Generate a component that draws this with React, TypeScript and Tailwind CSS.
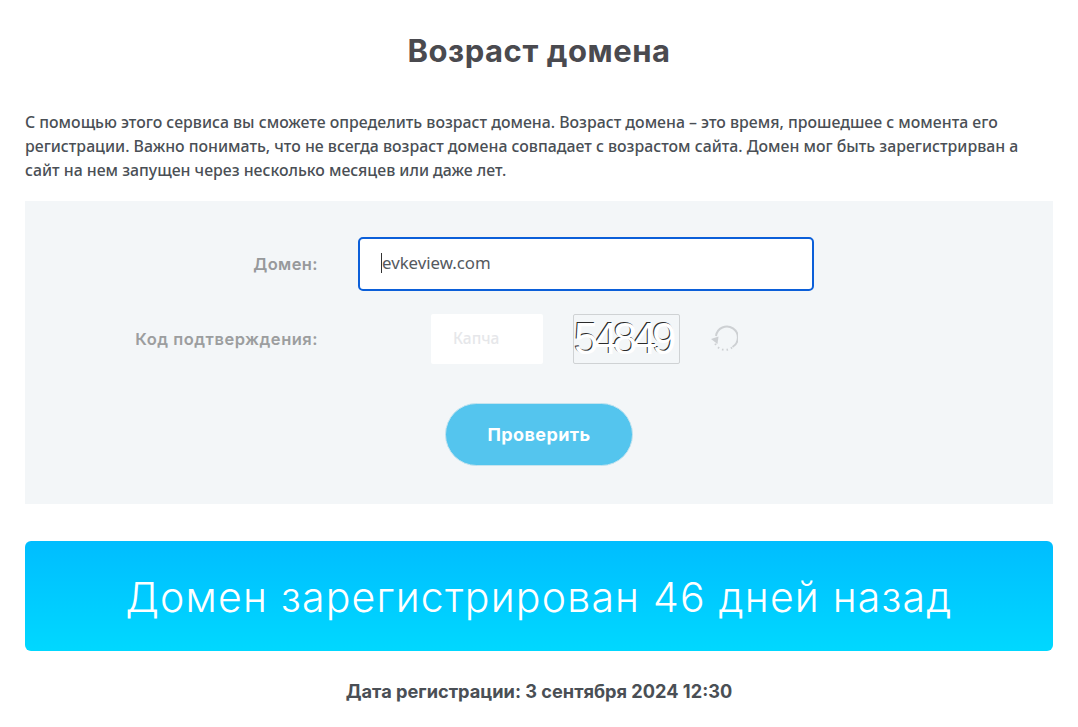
export default function App() {
  return (
    <div className="min-h-[727px] overflow-hidden bg-white px-[25px] font-['Noto_Sans',sans-serif] text-[#4a4f55]">
      <h1 className="pt-[31px] text-center font-['Inter',sans-serif] text-[31px] font-bold leading-[40px] tracking-[0.55px] text-[#4a4a4f]">
        Возраст домена
      </h1>

      <p className="mt-[39px] whitespace-nowrap text-[15.85px] font-medium leading-[24px]">
        С помощью этого сервиса вы сможете определить возраст домена. Возраст домена – это время, прошедшее с момента его
        <br />
        регистрации. Важно понимать, что не всегда возраст домена совпадает с возрастом сайта. Домен мог быть зарегистрирван а
        <br />
        сайт на нем запущен через несколько месяцев или даже лет.
      </p>

      <div className="mt-[19px] flex h-[303px] flex-col bg-[#f3f6f8] pt-[36px]">
        <div className="flex items-center">
          <label className="w-[293px] text-right font-['Inter',sans-serif] text-[16.5px] font-semibold tracking-[0.4px] text-[#97999b]">Домен:</label>
          <div className="ml-[40px] flex h-[54px] w-[456px] items-center rounded-[5px] border-2 border-[#0b5fd9] bg-white pb-[2px] pl-[21px] text-[16.8px] text-[#55595e]">
            <span className="h-[20px] w-px bg-[#333]" />
            <span>evkeview.com</span>
          </div>
        </div>

        <div className="mt-[23px] flex items-center">
          <label className="w-[293px] text-right font-['Inter',sans-serif] text-[16.5px] font-semibold tracking-[0.5px] text-[#9c9e9f]">Код подтверждения:</label>
          <div className="ml-[113px] flex h-[50px] w-[112px] items-center rounded-[2px] bg-white pl-[22px] text-[15.5px] font-medium text-[#e6e7ea]">
            Капча
          </div>
          <div className="ml-[30px] flex h-[50px] w-[107px] items-center overflow-hidden rounded-[2px] border border-[#cfd2d4] bg-[#f3f6f8]">
            <span className="font-['Liberation_Sans',sans-serif] text-[44px] leading-none tracking-[-5px] text-white [text-shadow:-1px_-1px_0_#2a2a2a]">
              54849
            </span>
          </div>
          <svg className="ml-[30px]" width="28" height="28" viewBox="0 -1 28 28" fill="none" stroke="#cdd0d3" strokeWidth="2">
            <path d="M6 10 A 11 11 0 1 1 22.5 21" />
            <path d="M22 21.5 A 11 11 0 0 1 5 17" strokeDasharray="1.5 3" />
            <path d="M1 13 L8.5 10.5 L7.5 18 Z" fill="#cdd0d3" stroke="none" />
          </svg>
        </div>

        <button className="mx-auto mt-[39px] h-[63px] w-[188px] rounded-full border border-[#c5e4ef] bg-[#54c5ee] font-['Inter',sans-serif] text-[18px] font-bold tracking-[0.4px] text-white">
          Проверить
        </button>
      </div>

      <div className="mt-[37px] flex h-[110px] items-center justify-center rounded-[6px] bg-gradient-to-b from-[#00bdff] to-[#00d8ff] pt-[3px] font-['Inter',sans-serif] text-[41px] font-light tracking-[1.2px] text-white">
        Домен зарегистрирован 46 дней назад
      </div>

      <p className="mt-[27px] text-center font-['Inter',sans-serif] text-[18.2px] font-bold leading-[26px] text-[#4a4f55]">
        Дата регистрации: 3 сентября 2024 12:30
      </p>
    </div>
  )
}
